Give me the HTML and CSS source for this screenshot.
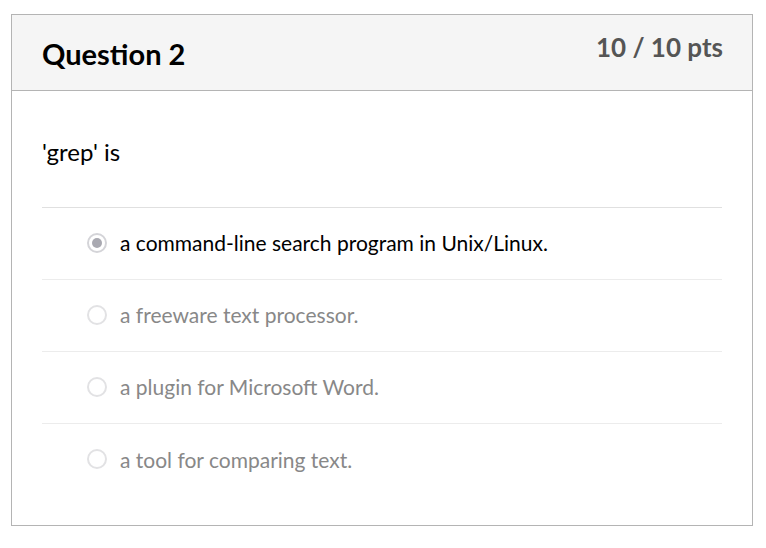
FILE: index.html
```html
<!DOCTYPE html>
<html>
<head>
<meta charset="utf-8">
<link rel="stylesheet" href="styles.css">
</head>
<body>
<div class="card">
  <div class="header">
    <h2 class="title">Question 2</h2>
    <div class="points">10 / 10 pts</div>
  </div>
  <div class="content">
    <p class="question">'grep' is</p>
    <div class="answers">
      <div class="answer selected"><span class="radio checked"></span><span class="label">a command-line search program in Unix/Linux.</span></div>
      <div class="answer"><span class="radio"></span><span class="label">a freeware text processor.</span></div>
      <div class="answer"><span class="radio"></span><span class="label">a plugin for Microsoft Word.</span></div>
      <div class="answer"><span class="radio"></span><span class="label">a tool for comparing text.</span></div>
    </div>
  </div>
</div>
</body>
</html>
```
FILE: styles.css
```css
* { box-sizing: border-box; }
body {
  margin: 0;
  background: #fff;
  font-family: Lato, "Open Sans", sans-serif;
  color: #000;
}
.card {
  margin: 14px 0 0 11px;
  width: 742px;
  height: 512px;
  border: 1px solid #b4b4b4;
}
.header {
  height: 76px;
  background: #f5f5f5;
  border-bottom: 1px solid #b4b4b4;
  display: flex;
  justify-content: space-between;
  align-items: flex-start;
  padding: 0 29px 0 30px;
}
.title {
  margin: 0;
  padding-top: 23px;
  font-size: 29px;
  font-weight: 700;
  line-height: 32px;
}
.points {
  padding-top: 17px;
  font-size: 26px;
  font-weight: 700;
  line-height: 30px;
  color: #555;
}
.content {
  padding: 0 30px;
}
.question {
  margin: 0;
  padding: 46px 0 0;
  height: 117px;
  font-size: 24px;
  line-height: 30px;
  border-bottom: 1px solid #e0e0e0;
}
.answer {
  height: 72px;
  display: flex;
  align-items: center;
  padding-left: 45px;
  padding-bottom: 2px;
  border-bottom: 1px solid #ececec;
}
.answer:last-child { border-bottom: none; }
.radio {
  width: 20px;
  height: 20px;
  border: 2px solid #e2e2e4;
  border-radius: 50%;
  margin-right: 13px;
  display: flex;
  align-items: center;
  justify-content: center;
  flex: none;
}
.radio.checked { border-color: #d4d4d8; }
.radio.checked::after {
  content: "";
  width: 10px;
  height: 10px;
  border-radius: 50%;
  background: #a9a9b1;
}
.label {
  font-size: 21px;
  color: #888;
}
.selected .label { color: #000; }
```
